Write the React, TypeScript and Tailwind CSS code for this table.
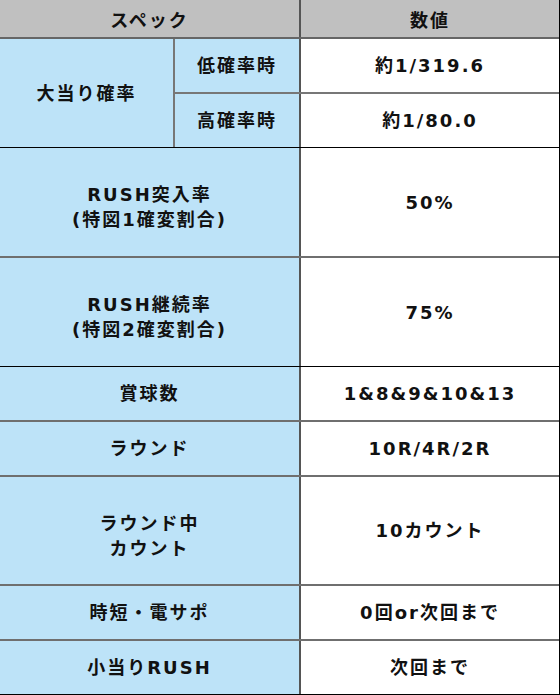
const font = {
  fontFamily: '"DejaVu Sans", "Noto Sans CJK JP", sans-serif',
};

interface SpecRow {
  label: string[];
  value: string;
  height: string;
  border: string;
}

const rows: SpecRow[] = [
  {
    label: ["RUSH突入率", "(特図1確変割合)"],
    value: "50%",
    height: "h-[108px]",
    border: "border-b-2 border-[#6f6f6f]",
  },
  {
    label: ["RUSH継続率", "(特図2確変割合)"],
    value: "75%",
    height: "h-[108px]",
    border: "border-b border-black",
  },
  {
    label: ["賞球数"],
    value: "1&8&9&10&13",
    height: "h-[53px]",
    border: "border-b-2 border-[#6f6f6f]",
  },
  {
    label: ["ラウンド"],
    value: "10R/4R/2R",
    height: "h-[53px]",
    border: "border-b-2 border-[#6f6f6f]",
  },
  {
    label: ["ラウンド中", "カウント"],
    value: "10カウント",
    height: "h-[107px]",
    border: "border-b-2 border-[#6f6f6f]",
  },
  {
    label: ["時短・電サポ"],
    value: "0回or次回まで",
    height: "h-[53px]",
    border: "border-b-2 border-[#6f6f6f]",
  },
  {
    label: ["小当りRUSH"],
    value: "次回まで",
    height: "h-[53px]",
    border: "border-b border-black",
  },
];

const Cell = ({ children, className }: { children: React.ReactNode; className?: string }) => (
  <div
    className={`flex flex-col items-center justify-center text-center text-[18px] font-bold leading-[25px] tracking-[2px] text-[#111] ${className ?? ""}`}
  >
    {children}
  </div>
);

export default function App() {
  return (
    <div className="w-[560px] h-[695px] border-r border-black bg-white" style={font}>
      <div className="flex h-[39px] border-b-2 border-[#666] bg-[#c0c0c0]">
        <Cell className="w-[301px] border-r-2 border-[#555] pt-1">スペック</Cell>
        <Cell className="flex-1 pt-1">数値</Cell>
      </div>

      <div className="flex h-[109px] border-b border-black">
        <Cell className="w-[175px] border-r-2 border-[#777] bg-[#bde3f8]">大当り確率</Cell>
        <div className="flex flex-1 flex-col">
          <div className="flex h-[55px] border-b-2 border-[#777]">
            <Cell className="w-[126px] border-r-2 border-[#555] bg-[#bde3f8]">低確率時</Cell>
            <Cell className="flex-1">約1/319.6</Cell>
          </div>
          <div className="flex flex-1">
            <Cell className="w-[126px] border-r-2 border-[#555] bg-[#bde3f8]">高確率時</Cell>
            <Cell className="flex-1">約1/80.0</Cell>
          </div>
        </div>
      </div>

      {rows.map((row) => (
        <div key={row.value} className={`flex ${row.border}`}>
          <Cell
            className={`w-[301px] border-r-2 border-[#555] bg-[#bde3f8] ${row.height} ${
              row.label.length > 1 ? "pt-[10px]" : ""
            }`}
          >
            {row.label.map((line) => (
              <span key={line}>{line}</span>
            ))}
          </Cell>
          <Cell className={`flex-1 ${row.height}`}>{row.value}</Cell>
        </div>
      ))}
    </div>
  );
}
